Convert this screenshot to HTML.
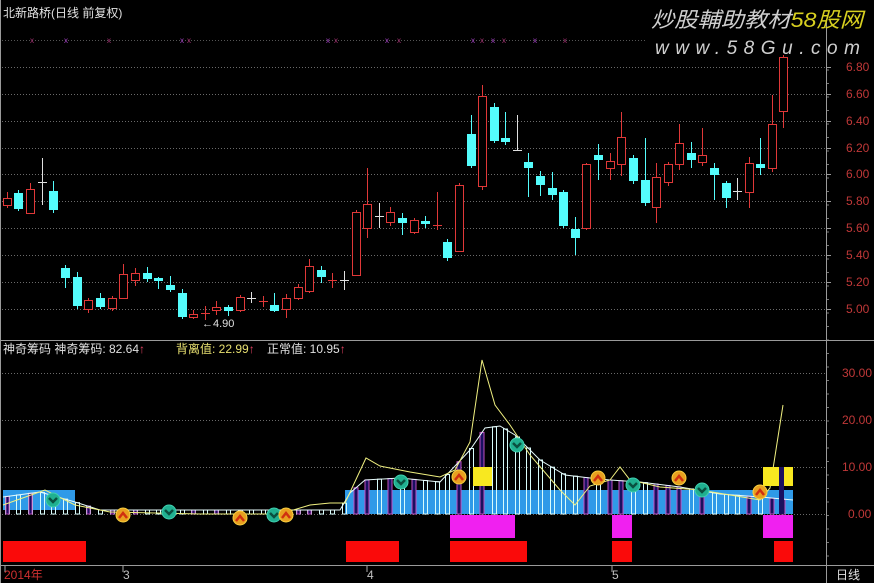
<!DOCTYPE html>
<html><head><meta charset="utf-8">
<style>
html,body{margin:0;padding:0;background:#000;width:874px;height:583px;overflow:hidden}
svg{display:block}
text{font-family:"Liberation Sans","Noto Sans CJK SC",sans-serif}
</style></head>
<body>
<svg id="s" width="874" height="583" xmlns="http://www.w3.org/2000/svg">
<rect width="874" height="583" fill="#000"/>
<g id="grid"></g>
<g id="candles"></g>
<g id="lower"></g>
<g id="top"></g>
<line x1="0" y1="340.5" x2="874" y2="340.5" stroke="#9a9a9a"/>
<line x1="826.5" y1="20" x2="826.5" y2="583" stroke="#9a9a9a"/>
<line x1="0" y1="565.5" x2="874" y2="565.5" stroke="#9a9a9a"/>
<line x1="0.5" y1="0" x2="0.5" y2="583" stroke="#9a9a9a"/>
<text x="3" y="17" font-size="12" fill="#e0e0e0">北新路桥(日线 前复权)</text>
<text x="651" y="27" font-size="21" fill="#cfcfcf" font-style="italic" textLength="212" lengthAdjust="spacingAndGlyphs">炒股輔助教材<tspan fill="#d8d020">58股网</tspan></text>
<text x="655" y="54" font-size="19" fill="#cfcfcf" font-style="italic" textLength="205" lengthAdjust="spacing">www.58Gu.com</text>
<text x="3" y="353" font-size="12" fill="#e0e0e0">神奇筹码 神奇筹码: 82.64<tspan fill="#e04060">↑</tspan></text>
<text x="176" y="353" font-size="12" fill="#e8e070">背离值: 22.99<tspan fill="#e04060">↑</tspan></text>
<text x="267" y="353" font-size="12" fill="#e0e0e0">正常值: 10.95<tspan fill="#e04060">↑</tspan></text>
<text x="202" y="327" font-size="11" fill="#e0e0e0">←4.90</text>
<text x="4" y="579" font-size="12" fill="#d03030">2014年</text>
<text x="123" y="579" font-size="12" fill="#c0c0c0">3</text>
<text x="367" y="579" font-size="12" fill="#c0c0c0">4</text>
<text x="612" y="579" font-size="12" fill="#c0c0c0">5</text>
<text x="836" y="579" font-size="12" fill="#e0e0e0">日线</text>
<g font-size="12" fill="#c03838" id="axis"></g>
</svg>
<script>
const NS="http://www.w3.org/2000/svg";
function el(p,t,a){const e=document.createElementNS(NS,t);for(const k in a)e.setAttribute(k,a[k]);document.getElementById(p).appendChild(e);return e;}
const gy=[67,94,121,148,174,201,228,255,282,309];
const gl=["6.80","6.60","6.40","6.20","6.00","5.80","5.60","5.40","5.20","5.00"];
gy.forEach((y,i)=>{el("grid","line",{x1:2,y1:y+.5,x2:826,y2:y+.5,stroke:"#6a6a6a","stroke-dasharray":"1 2"});
 const t=el("axis","text",{x:846,y:y+4});t.textContent=gl[i];
 el("grid","line",{x1:826,y1:y+.5,x2:831,y2:y+.5,stroke:"#9a9a9a"});});
[40].forEach(y=>el("grid","line",{x1:2,y1:y+.5,x2:645,y2:y+.5,stroke:"#555","stroke-dasharray":"1 2"}));
[33,67,110,183,190,329,337,388,400,474,483,494,505,536,566].forEach((x,i)=>{const t=el("grid","text",{x:x-3,y:43,"font-size":8,fill:i%2?"#a040c0":"#a03070"});t.textContent="x";});
const ly=[[373,"30.00"],[420,"20.00"],[467,"10.00"],[514,"0.00"]];
ly.forEach(([y,l])=>{el("grid","line",{x1:2,y1:y+.5,x2:826,y2:y+.5,stroke:"#6a6a6a","stroke-dasharray":"1 2"});
 const t=el("axis","text",{x:l.length>4?842:848,y:y+4});t.textContent=l;});
for(let y=70;y<560;y+=13.5)el("grid","line",{x1:826,y1:y,x2:829,y2:y,stroke:"#777"});
[5,123,367,612].forEach(x=>el("grid","line",{x1:x,y1:565,x2:x,y2:572,stroke:"#aaa"}));
const C=[[7,198,205,192,208,'r'],[18,193,209,190,211,'c'],[30,189,213,183,214,'r'],[42,182,182,158,205,'w'],[53,191,210,181,213,'c'],
[65,268,278,265,288,'c'],[77,277,306,272,309,'c'],[88,300,309,298,313,'r'],[100,298,307,293,309,'c'],[112,298,308,296,311,'r'],
[123,274,298,264,299,'r'],[135,273,280,268,286,'r'],[147,273,279,267,282,'c'],[158,278,281,277,289,'c'],[170,285,290,276,292,'c'],
[182,293,317,289,319,'c'],[193,314,317,310,319,'r'],[205,313,313,306,320,'x'],[216,307,310,301,315,'r'],[228,307,311,305,316,'c'],
[240,297,310,295,312,'r'],[251,298,298,292,303,'w'],[263,301,301,296,307,'x'],[274,305,311,293,312,'c'],[286,298,309,294,318,'r'],
[298,287,298,284,300,'r'],[309,266,291,259,293,'r'],[321,270,277,266,283,'c'],[332,280,280,273,288,'x'],[344,280,280,271,290,'w'],
[356,212,275,210,276,'r'],[367,204,228,168,238,'r'],[379,216,216,203,228,'w'],[390,212,222,207,226,'r'],[402,218,223,213,235,'c'],
[414,220,232,218,234,'r'],[425,221,224,216,228,'c'],[437,225,225,192,230,'x'],[447,242,258,239,261,'c'],[459,185,251,183,252,'r'],
[471,134,166,115,168,'c'],[482,96,186,85,190,'r'],[494,107,141,103,143,'c'],[505,138,142,112,145,'c'],[517,150,150,115,150,'w'],
[528,162,168,153,197,'c'],[540,176,185,171,196,'c'],[552,188,195,172,200,'c'],[563,192,226,190,228,'c'],[575,229,238,217,255,'c'],
[586,164,228,163,230,'r'],[598,155,160,144,180,'c'],[610,161,168,153,180,'r'],[621,137,164,112,176,'r'],[633,158,181,155,184,'c'],
[645,180,203,138,206,'c'],[656,177,207,163,223,'r'],[668,164,182,162,186,'r'],[679,143,164,124,170,'r'],[691,153,160,142,168,'c'],
[702,155,162,128,166,'r'],[714,168,175,163,200,'c'],[726,183,198,181,208,'c'],[737,191,191,178,200,'w'],[749,163,192,157,208,'r'],
[760,164,168,138,175,'c'],[772,124,168,95,172,'r'],[783,57,111,55,128,'r']];
C.forEach(([x,t,b,h,l,k])=>{
 const col=k=='c'?'#54fcfc':(k=='w'?'#e0e0e0':'#e03838');
 el("candles","line",{x1:x+.5,y1:h,x2:x+.5,y2:l,stroke:col});
 if(k=='w'||k=='x'){el("candles","line",{x1:x-4,y1:t+.5,x2:x+5,y2:t+.5,stroke:col});}
 else if(k=='c'){el("candles","rect",{x:x-4,y:t,width:9,height:Math.max(b-t,2),fill:col});}
 else{el("candles","rect",{x:x-3.5,y:t+.5,width:8,height:Math.max(b-t,1),fill:"#000",stroke:col});}
});
const L="lower";
el(L,"rect",{x:3,y:490,width:72,height:20,fill:"#2f9ae8"});
el(L,"rect",{x:345,y:490,width:448,height:24,fill:"#2f9ae8"});
const P=[[3,497],[40,492],[75,502],[100,510],[340,510],[350,493],[365,480],[400,478],[440,482],[470,450],[485,428],[500,426],[515,435],[540,460],[565,475],[590,478],[610,480],[640,482],[680,487],[720,494],[760,497],[793,500]];
function v(x){for(let i=0;i<P.length-1;i++){if(x>=P[i][0]&&x<=P[i+1][0]){const r=(x-P[i][0])/(P[i+1][0]-P[i][0]);return P[i][1]+r*(P[i+1][1]-P[i][1]);}}return 510;}
C.forEach(([x,t,b,h,l,k])=>{
 const y=v(x);
 if(k=='r'&&x>340){el(L,"rect",{x:x-2,y:y,width:4,height:514-y,fill:"#1a1060",stroke:"#c050c0"});}
 else{el(L,"rect",{x:x-1.5,y:y,width:4,height:514-y,fill:"none",stroke:"#d8fcfc"});}
 if(x<340&&k=='r')el(L,"rect",{x:x-1,y:y,width:3,height:514-y,fill:"#1a1060",stroke:"#b040b0"});
});
el(L,"polyline",{points:P.map(p=>p.join(",")).join(" "),fill:"none",stroke:"#e8fcfc","stroke-width":1});
const Y=[[3,505],[45,490],[75,505],[110,512],[200,514],[280,514],[310,505],[330,503],[345,503],[366,458],[380,466],[410,472],[440,477],[455,470],[470,442],[482,360],[495,405],[510,425],[530,455],[560,490],[575,505],[590,486],[610,480],[620,467],[630,480],[660,487],[700,490],[760,500],[770,488],[783,405]];
el(L,"polyline",{points:Y.map(p=>p.join(",")).join(" "),fill:"none",stroke:"#f0f080","stroke-width":1});
const T="top";
[[450,65],[612,20],[763,30]].forEach(([x,w])=>el(T,"rect",{x:x,y:515,width:w,height:23,fill:"#f020f0"}));
[[473,19],[763,30]].forEach(([x,w])=>el(T,"rect",{x:x,y:467,width:w,height:19,fill:"#f8e820"}));
el(T,"rect",{x:779,y:467,width:5,height:47,fill:"#1a1060"});
[[3,83],[346,53],[450,77],[612,20],[774,19]].forEach(([x,w])=>el(T,"rect",{x:x,y:541,width:w,height:21,fill:"#fa0a0a"}));
function up(x,y){el(T,"circle",{cx:x,cy:y,r:7,fill:"#e8a020",stroke:"#f8d040"});el(T,"polyline",{points:`${x-4},${y+3} ${x},${y-2} ${x+4},${y+3}`,fill:"none",stroke:"#d03010","stroke-width":2.5});}
function dn(x,y){el(T,"circle",{cx:x,cy:y,r:7,fill:"#20b090",stroke:"#40d0b0"});el(T,"polyline",{points:`${x-4},${y-2} ${x},${y+2} ${x+4},${y-2}`,fill:"none",stroke:"#0a5040","stroke-width":2.5});}
dn(53,500);up(123,515);dn(169,512);up(240,518);dn(274,515);up(286,515);dn(401,482);up(459,477);dn(517,445);up(598,478);dn(633,485);up(679,478);dn(702,490);up(760,492);
</script>
</body></html>
